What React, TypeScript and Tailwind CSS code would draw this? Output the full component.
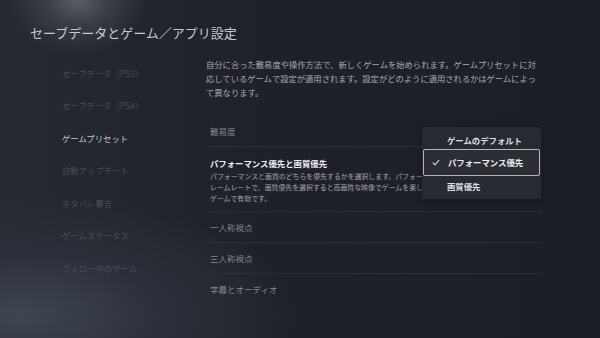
const menu = [
  "セーブデータ（PS5）",
  "セーブデータ（PS4）",
  "ゲームプリセット",
  "自動アップデート",
  "ネタバレ警告",
  "ゲームステータス",
  "フォロー中のゲーム",
];

const CheckIcon = () => (
  <svg width="8" height="7" viewBox="0 0 8 7" fill="none">
    <path d="M0.8 3.6 L3 5.8 L7.2 1" stroke="#e8e8e8" strokeWidth="1.1" />
  </svg>
);

export default function App() {
  return (
    <div className="relative w-[600px] h-[338px] overflow-hidden bg-[#1c1f27] bg-[radial-gradient(ellipse_70px_55px_at_78px_0px,#5b5e66_0%,#3a3d45_45%,transparent_100%),radial-gradient(ellipse_280px_120px_at_20px_315px,#404651_0%,#2b303a_50%,transparent_100%),linear-gradient(90deg,#262930_0%,#1e2129_45%,#1c1f27_100%)] font-['Noto_Sans_CJK_JP',sans-serif]">
      <div className="pt-[25px] pl-[30px] text-[13px] leading-[16px] text-[#c9c9cc]">
        セーブデータとゲーム／アプリ設定
      </div>

      <div className="flex mt-[16px]">
        <div className="w-[206px] pl-[62px] flex flex-col">
          {menu.map((m) => (
            <div
              key={m}
              className={
                m === "ゲームプリセット"
                  ? "h-[32.5px] flex items-center text-[8.4px] text-[#c4c5c8]"
                  : "h-[32.5px] flex items-center text-[8.4px] text-[#4a4d55]"
              }
            >
              {m}
            </div>
          ))}
        </div>

        <div className="w-[336px] flex flex-col">
          <div className="text-[8.3px] leading-[14px] text-[#a9aaae] whitespace-nowrap">
            <div>自分に合った難易度や操作方法で、新しくゲームを始められます。ゲームプリセットに対</div>
            <div>応しているゲームで設定が適用されます。設定がどのように適用されるかはゲームによっ</div>
            <div>て異なります。</div>
          </div>

          <div className="mt-[18px] ml-[3px] flex flex-col">
            <div className="h-[30px] flex items-center pl-[1px] border-b border-[#2b2e36] text-[8.5px] text-[#85878c]">
              難易度
            </div>
            <div className="h-[65px] pt-[10px] pl-[1px] border-b border-[#2b2e36]">
              <div className="text-[8.4px] leading-[12px] font-bold text-[#ececee]">
                パフォーマンス優先と画質優先
              </div>
              <div className="mt-[2px] text-[6.9px] leading-[11px] text-[#a4a5a9] whitespace-nowrap">
                <div>パフォーマンスと画質のどちらを優先するかを選択します。パフォー</div>
                <div>レームレートで、画質優先を選択すると高画質な映像でゲームを楽し</div>
                <div>ゲームで有効です。</div>
              </div>
            </div>
            <div className="h-[31px] flex items-center pl-[1px] border-b border-[#2b2e36] text-[8.5px] text-[#85878c]">
              一人称視点
            </div>
            <div className="h-[31px] flex items-center pl-[1px] border-b border-[#2b2e36] text-[8.5px] text-[#85878c]">
              三人称視点
            </div>
            <div className="h-[31px] flex items-center pl-[1px] text-[8.5px] text-[#85878c]">
              字幕とオーディオ
            </div>
          </div>
        </div>
      </div>

      <div className="absolute left-[422px] top-[127px] w-[119px] h-[72px] bg-[#282a31] shadow-[0_2px_8px_rgba(0,0,0,0.35)] flex flex-col">
        <div className="h-[22px] pt-[4px] flex items-center pl-[25px] text-[8.4px] font-bold text-[#dedee0]">
          ゲームのデフォルト
        </div>
        <div className="h-[27px] mx-[1px] rounded-[2px] border-[1.5px] border-[#b9b2b2] bg-[#2c2e35] flex items-center pl-[8px] text-[8.4px] font-bold text-[#ececee]">
          <CheckIcon />
          <span className="ml-[8px]">パフォーマンス優先</span>
        </div>
        <div className="h-[20px] flex items-center pl-[25px] text-[8.4px] font-bold text-[#dedee0]">
          画質優先
        </div>
      </div>
    </div>
  );
}
